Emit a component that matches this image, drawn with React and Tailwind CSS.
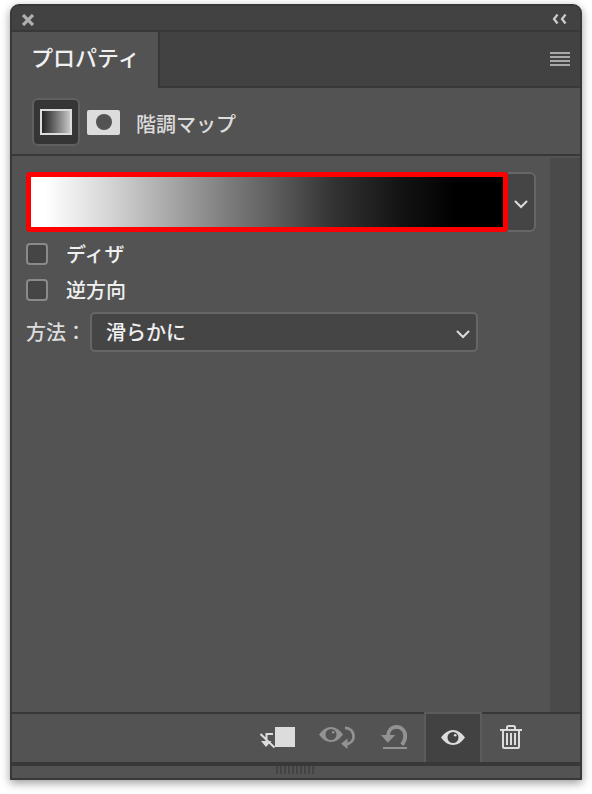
function Chevron() {
  return (
    <svg width="14" height="9" viewBox="0 0 14 9" fill="none" stroke="#dcdcdc" strokeWidth="2" strokeLinecap="round">
      <path d="M1.500 1.500 7 7l5.500-5.500" />
    </svg>
  );
}

function EyeShape() {
  return (
    <>
      <path
        fillRule="evenodd"
        fill="currentColor"
        d="M0 9.500C3.500 4.500 7.500 2 12 2s8.500 2.500 12 7.500C20.500 14.500 16.500 17 12 17S3.500 14.500 0 9.500zM12 4a5.500 5.500 0 1 0 0 11a5.500 5.500 0 0 0 0-11z"
      />
      <circle cx="14.200" cy="7.300" r="1.300" fill="currentColor" />
    </>
  );
}

function ClipIcon() {
  return (
    <svg width="38" height="24" viewBox="0 -1 38 24" fill="none" stroke="currentColor" strokeWidth="2">
      <rect x="15" y="1" width="20" height="20" fill="currentColor" stroke="none" />
      <path d="M13 8H6.500v8M0.500 8 14.500 21.500" />
      <path d="M1 15h10.500l-5.500 6z" fill="currentColor" stroke="none" />
    </svg>
  );
}

function PreviousStateIcon() {
  return (
    <svg width="36" height="26" viewBox="0 -1 36 26" fill="none">
      <EyeShape />
      <path d="M26 2.800C31 3 34.600 6.500 34.600 11S31.500 18.800 27 19" stroke="currentColor" strokeWidth="2.800" />
      <path d="M22 18.700 28.500 13.500V24z" fill="currentColor" />
    </svg>
  );
}

function ResetIcon() {
  return (
    <svg width="29" height="24" viewBox="0 0 29 24" fill="none">
      <path d="M6.800 11C7.300 5.500 10.800 1.900 15.500 1.900C20.500 1.900 24.200 5.800 24.200 11C24.200 14.800 22.800 17.500 20.800 19.800" stroke="currentColor" strokeWidth="3.800" />
      <path d="M0 10h14.300L6.800 17.800z" fill="currentColor" />
      <rect x="2" y="22" width="24" height="2" fill="currentColor" />
    </svg>
  );
}

function EyeIcon() {
  return (
    <svg width="24" height="20" viewBox="0 0 24 20" fill="none">
      <EyeShape />
    </svg>
  );
}

function TrashIcon() {
  return (
    <svg width="22" height="24" viewBox="0 0 22 24" fill="none" stroke="currentColor" strokeWidth="2">
      <path d="M0 5h22M3 5v17a1 1 0 0 0 1 1h14a1 1 0 0 0 1-1V5" />
      <path d="M7 4.500V2.500Q7 1 8.500 1h5Q15 1 15 2.500v2" />
      <path d="M7 8v12M11 8v12M15 8v12" />
    </svg>
  );
}

function CheckRow({ id, label }) {
  return (
    <div className="flex h-9 items-center">
      <input
        id={id}
        type="checkbox"
        className="size-[22px] appearance-none rounded-[4px] border-2 border-[#8a8a8a] bg-[#454545] checked:bg-[#8a8a8a]"
      />
      <label htmlFor={id} className="pl-[18px] font-medium text-[#f0f0f0]">
        {label}
      </label>
    </div>
  );
}

const tools = [
  { label: "クリッピング", icon: <ClipIcon />, style: "text-[#dcdcdc]" },
  { label: "前の状態を表示", icon: <PreviousStateIcon />, style: "text-[#929292]" },
  { label: "初期設定に戻す", icon: <ResetIcon />, style: "text-[#929292]" },
  { label: "表示の切り替え", icon: <EyeIcon />, style: "text-[#dcdcdc] border-2 border-b-0 border-[#5c5c5c] bg-[#424242]" },
  { label: "削除", icon: <TrashIcon />, style: "text-[#dcdcdc]" },
];

export default function App() {
  return (
    <div className="flex min-h-screen flex-col bg-white px-[10px] pt-1 pb-[14px] font-['Noto_Sans_CJK_JP',sans-serif] text-[20px] leading-7">
      <div className="flex flex-1 flex-col overflow-hidden rounded-t-[9px] border-2 border-[#383838] bg-[#535353] shadow-[0_3px_10px_rgba(0,0,0,0.4)]">
        {/* Title bar */}
        <div className="flex h-[26px] items-center justify-between border-b-2 border-[#383838] bg-[#424242] px-[10px]">
          <button aria-label="閉じる">
            <svg width="12" height="12" viewBox="0 0 12 12" stroke="#b0b0b0" strokeWidth="3.200" className="mt-1">
              <path d="M1 1l10 10M11 1 1 11" />
            </svg>
          </button>
          <button aria-label="パネルを折りたたむ" className="pt-0.5 pr-[3px]">
            <svg width="15" height="10" viewBox="0 0 15 10" fill="none" stroke="#cfcfcf" strokeWidth="2.200">
              <path d="M5.500 0.500 2 5l3.500 4.500M13.500 0.500 10 5l3.500 4.500" />
            </svg>
          </button>
        </div>

        {/* Tabs */}
        <div className="flex h-14 bg-[#424242]">
          <button className="border-r-2 border-[#383838] bg-[#535353] pr-[18px] pb-2 pl-[19px] text-[22px] font-medium text-[#f0f0f0]">
            プロパティ
          </button>
          <div className="flex flex-1 items-center justify-end border-b-2 border-[#383838] pr-[10px]">
            <button aria-label="パネルメニュー">
              <svg width="20" height="14" viewBox="0 0 20 14" fill="#a8a8a8">
                <path d="M0 0h20v2H0zM0 4h20v2H0zM0 8h20v2H0zM0 12h20v2H0z" />
              </svg>
            </button>
          </div>
        </div>

        {/* Adjustment type */}
        <div className="flex h-[68px] items-center border-b-2 border-[#383838] pt-0.5 pl-5">
          <button aria-label="調整" className="flex size-12 items-center justify-center rounded-md border-2 border-[#606060] bg-[#353535]">
            <span className="h-[26px] w-8 border-2 border-[#dcdcdc] bg-linear-to-r from-[#262626] to-[#c8c8c8]" />
          </button>
          <button aria-label="マスク" className="ml-[7px] flex h-[25px] w-[33px] items-center justify-center rounded-[2px] bg-[#dcdcdc]">
            <span className="size-4 rounded-full bg-[#535353]" />
          </button>
          <h2 className="pt-1 pl-4 font-medium text-[#dcdcdc]">階調マップ</h2>
        </div>

        {/* Settings */}
        <div className="flex flex-1">
          <div className="flex-1 px-[14px] pt-4">
            <div className="flex h-[60px]">
              <button
                aria-label="グラデーションを編集"
                className="flex-1 rounded-[4px] border-[5px] border-[#ff0000] bg-[linear-gradient(to_right,#fff_3%,#dadada_15%,#787878_43%,#5c5c5c_52%,#333_64%,#141414_78%,#000_90%)]"
              />
              <button
                aria-label="グラデーションを選択"
                className="flex w-7 items-center justify-center rounded-r-md border-2 border-l-0 border-[#666666] bg-[#454545] pt-1"
              >
                <Chevron />
              </button>
            </div>

            <div className="pt-1">
              <CheckRow id="dither" label="ディザ" />
              <CheckRow id="reverse" label="逆方向" />
            </div>

            <div className="flex items-center pt-1">
              <label htmlFor="method" className="w-16 whitespace-nowrap font-medium text-[#dcdcdc]">
                方法：
              </label>
              <div className="relative mr-[58px] flex-1">
                <select
                  id="method"
                  className="block h-10 w-full appearance-none rounded-[5px] border-2 border-[#666666] bg-[#454545] pr-10 pl-[14px] font-medium text-[#f0f0f0]"
                >
                  <option>滑らかに</option>
                </select>
                <span className="pointer-events-none absolute inset-y-0 right-2 flex items-center pt-1">
                  <Chevron />
                </span>
              </div>
            </div>
          </div>
          <div className="mt-0.5 w-[30px] bg-[#4a4a4a]" />
        </div>

        {/* Toolbar */}
        <div className="flex h-[50px] justify-end border-t-2 border-[#383838] pr-10">
          {tools.map((tool) => (
            <button
              key={tool.label}
              aria-label={tool.label}
              className={`-mt-0.5 flex w-[58px] items-center justify-center ${tool.style}`}
            >
              {tool.icon}
            </button>
          ))}
        </div>

        {/* Resize grip */}
        <div className="flex h-4 justify-center gap-0.5 border-t-4 border-[#383838] pr-[2px]">
          {Array.from({ length: 10 }, (_, i) => (
            <span key={i} className="h-2 w-0.5 bg-[#434343]" />
          ))}
        </div>
      </div>
    </div>
  );
}
